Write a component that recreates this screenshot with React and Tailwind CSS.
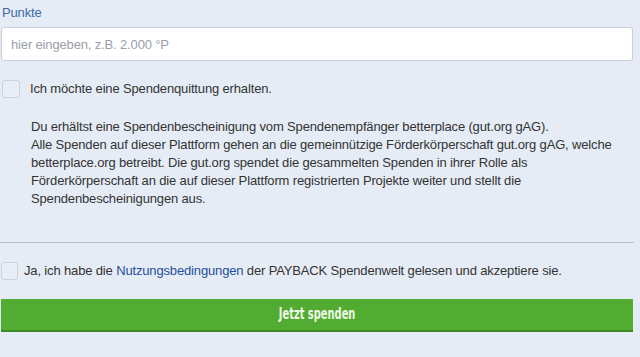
export default function App() {
  return (
    <div className="min-h-[357px] w-[640px] bg-[#e6ecf5] font-['Liberation_Sans',Arial,sans-serif] text-[13px] tracking-[-0.15px] text-[#333]">
      <div className="ml-[1px] w-[632px] pt-[5px]">
        {/* Punkte */}
        <label className="block pl-[1px] text-[13px] leading-[16px] text-[#3b6aa6]">Punkte</label>
        <input
          type="text"
          placeholder="hier eingeben, z.B. 2.000 °P"
          className="mt-[6px] block h-[34px] w-full rounded-[3px] border border-[#c9ced8] bg-white px-[9px] text-[13px] tracking-[-0.15px] text-[#333] outline-none placeholder:text-[#9aa0aa]"
        />

        {/* Spendenquittung */}
        <div className="mt-[19px] flex items-center">
          <span className="ml-[1px] block h-[18px] w-[18px] rounded-[3px] border border-[#cdd3dc] bg-[#e9eef6]"></span>
          <span className="ml-[10px] leading-[16px]">Ich möchte eine Spendenquittung erhalten.</span>
        </div>

        <p className="mt-[20px] pl-[30px] pr-[20px] leading-[18px] text-[#333]">
          Du erhältst eine Spendenbescheinigung vom Spendenempfänger betterplace (gut.org gAG).
          <br />
          Alle Spenden auf dieser Plattform gehen an die gemeinnützige Förderkörperschaft gut.org gAG, welche
          <br />
          betterplace.org betreibt. Die gut.org spendet die gesammelten Spenden in ihrer Rolle als
          <br />
          Förderkörperschaft an die auf dieser Plattform registrierten Projekte weiter und stellt die
          <br />
          Spendenbescheinigungen aus.
        </p>

        <div className="-ml-[1px] mt-[34px] h-px w-[634px] bg-[#b9bec8]"></div>

        {/* Nutzungsbedingungen */}
        <div className="mt-[19px] flex items-center">
          <span className="block h-[18px] w-[17px] rounded-[3px] border border-[#cdd3dc] bg-[#e9eef6]"></span>
          <span className="ml-[6px] leading-[16px]">
            Ja, ich habe die <span className="text-[#1f4f9a]">Nutzungsbedingungen</span> der PAYBACK Spendenwelt gelesen und akzeptiere sie.
          </span>
        </div>

        <button className="mt-[19px] flex h-[33px] w-full items-center justify-center border-b-2 border-[#3f8a26] bg-[#52ac31] text-[#eef8e8]">
          <span className="inline-block scale-x-[0.66] font-['DejaVu_Sans',sans-serif] text-[15px] font-bold tracking-normal">
            Jetzt spenden
          </span>
        </button>
      </div>
    </div>
  );
}
